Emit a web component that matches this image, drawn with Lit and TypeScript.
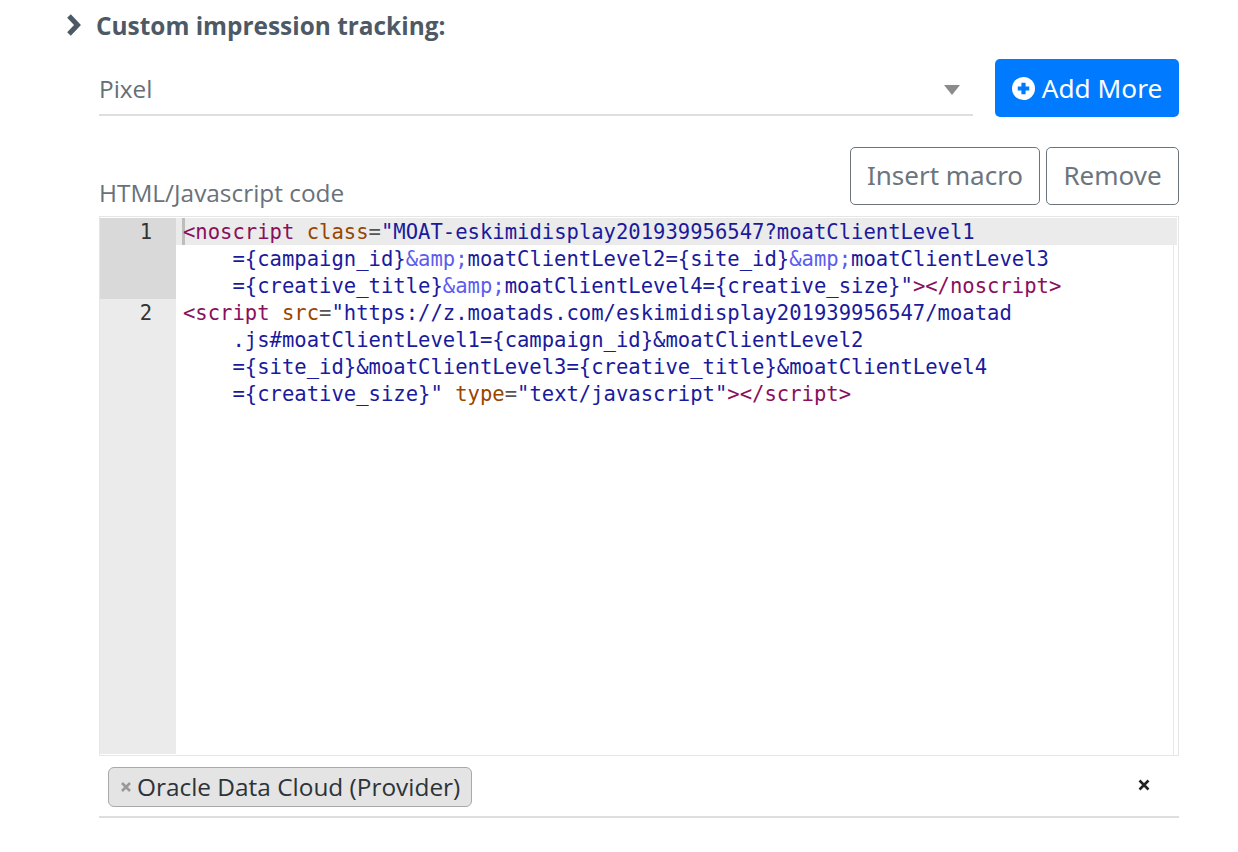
import { LitElement, html, css } from "lit";
import { customElement } from "lit/decorators.js";

const T = (s: string) => html`<span class="t">${s}</span>`;
const A = (s: string) => html`<span class="a">${s}</span>`;
const S = (s: string) => html`<span class="s">${s}</span>`;
const E = (s: string) => html`<span class="e">${s}</span>`;
const N = (s: string) => html`<span class="n">${s}</span>`;

@customElement("app-root")
export class AppRoot extends LitElement {
  static styles = css`
    :host {
      display: block;
      width: 1238px;
      height: 852px;
      box-sizing: border-box;
      padding: 10px 59px 0 65px;
      background: #fff;
      overflow: hidden;
      font-family: "Open Sans", "Noto Sans", sans-serif;
      color: #5f6a72;
    }
    .head {
      display: flex;
      align-items: center;
      gap: 15px;
      height: 30px;
      color: #4d5964;
      font-size: 24.4px;
      font-weight: 700;
    }
    .head svg { display: block; }
    .body {
      display: flex;
      flex-direction: column;
      margin: 19px 0 0 34px;
    }
    .row { display: flex; gap: 22px; }
    .select {
      flex: 1;
      height: 57px;
      align-self: flex-start;
      box-sizing: border-box;
      border-bottom: 2px solid #dedede;
      display: flex;
      align-items: center;
      justify-content: space-between;
      padding: 3px 13px 0 0;
      font-size: 24.4px;
      color: #666f76;
    }
    .caret {
      width: 0;
      height: 0;
      border-left: 8px solid transparent;
      border-right: 8px solid transparent;
      border-top: 10px solid #8b8b8b;
      margin-top: 3px;
    }
    .btn {
      box-sizing: border-box;
      height: 58px;
      display: flex;
      align-items: center;
      justify-content: center;
      border-radius: 5px;
      font-family: "Noto Sans", "Open Sans", sans-serif;
      font-size: 26px;
    }
    .add {
      width: 184px;
      background: #007bff;
      color: #fff;
      gap: 7px;
      font-size: 26.2px;
    }
    .outline {
      border: 1.5px solid #6c757d;
      color: #6c757d;
      background: #fff;
      padding-bottom: 2px;
    }
    .macro { width: 190px; }
    .remove { width: 133px; }
    .tools {
      display: flex;
      align-items: flex-end;
      gap: 6px;
      margin-top: 30px;
    }
    .label {
      flex: 1;
      font-size: 24.4px;
      color: #68727a;
      line-height: 30px;
      margin-bottom: -3px;
    }
    .editor {
      box-sizing: border-box;
      margin-top: 11px;
      height: 540px;
      border: 1px solid #e6e6e6;
      display: flex;
      font-family: "DejaVu Sans Mono", monospace;
      font-size: 20.55px;
      line-height: 29px;
      color: #1a1a8c;
    }
    .gutter {
      width: 76px;
      flex: none;
      background: #ebebeb;
      color: #333;
      text-align: right;
      margin-top: 1px;
      margin-bottom: 1px;
    }
    .gl { padding-right: 24px; box-sizing: border-box; height: 27px; }
    .gl.active { height: 81px; background: #d9d9d9; }
    .code {
      flex: 1;
      margin-top: 1px;
      margin-right: 4px;
      border-right: 1px solid #e9e9e9;
      min-width: 0;
    }
    .line {
      height: 27px;
      padding-left: 7px;
      box-sizing: border-box;
      white-space: pre;
    }
    .line.cur {
      position: relative;
      background: #ebebeb;
      margin-right: -4px;
    }
    .line.cur::before {
      content: "";
      position: absolute;
      left: 6px;
      top: 0;
      width: 3px;
      height: 27px;
      background: #bdbdbd;
    }
    .t { position: relative; color: #8a0f5c; }
    .a { color: #994500; }
    .s { color: #1a1a9c; }
    .e { color: #5c5cf0; }
    .n { color: #555; }
    .tags {
      display: flex;
      align-items: center;
      justify-content: space-between;
      height: 62px;
      border-bottom: 2px solid #dedede;
      padding: 1px 29px 0 9px;
      box-sizing: border-box;
    }
    .tag {
      box-sizing: border-box;
      height: 40px;
      width: 364px;
      border: 1px solid #a9a9a9;
      border-radius: 6px;
      background: #e4e4e4;
      display: flex;
      align-items: center;
      gap: 5px;
      padding-left: 11px;
      font-size: 24.4px;
      color: #2d3338;
      white-space: nowrap;
    }
    .tag svg, .tags > svg { flex: none; display: block; }
    .tags > svg { margin-bottom: 3px; }
  `;

  render() {
    return html`
      <div class="head">
        <svg width="16" height="24" viewBox="0 0 16 24">
          <path d="M4 3 L12.5 12 L4 21" fill="none" stroke="#4d5964" stroke-width="5" />
        </svg>
        <span>Custom impression tracking:</span>
      </div>
      <div class="body">
        <div class="row">
          <div class="select"><span>Pixel</span><span class="caret"></span></div>
          <div class="btn add">
            <svg width="23" height="23" viewBox="0 0 22 22">
              <circle cx="11" cy="11" r="11" fill="#fff" />
              <path d="M11 5.5V16.5M5.5 11H16.5" stroke="#007bff" stroke-width="4" />
            </svg>
            <span>Add More</span>
          </div>
        </div>
        <div class="tools">
          <div class="label">HTML/Javascript code</div>
          <div class="btn outline macro">Insert macro</div>
          <div class="btn outline remove">Remove</div>
        </div>
        <div class="editor">
          <div class="gutter">
            <div class="gl active">1</div>
            <div class="gl">2</div>
          </div>
          <div class="code">
            <div class="line cur">${T("<noscript")} ${A("class")}${N("=")}${S('"MOAT-eskimidisplay201939956547?moatClientLevel1')}</div>
            <div class="line">    ${S("={campaign_id}")}${E("&amp;")}${S("moatClientLevel2={site_id}")}${E("&amp;")}${S("moatClientLevel3")}</div>
            <div class="line">    ${S("={creative_title}")}${E("&amp;")}${S('moatClientLevel4={creative_size}"')}${T("></noscript>")}</div>
            <div class="line">${T("<script")} ${A("src")}${N("=")}${S('"https://z.moatads.com/eskimidisplay201939956547/moatad')}</div>
            <div class="line">    ${S(".js#moatClientLevel1={campaign_id}&moatClientLevel2")}</div>
            <div class="line">    ${S("={site_id}&moatClientLevel3={creative_title}&moatClientLevel4")}</div>
            <div class="line">    ${S('={creative_size}"')} ${A("type")}${N("=")}${S('"text/javascript"')}${T("></script>")}</div>
          </div>
        </div>
        <div class="tags">
          <div class="tag">
            <svg width="12" height="12" viewBox="0 0 12 12">
              <path d="M2 2L10 10M10 2L2 10" stroke="#999" stroke-width="2.6" />
            </svg>
            <span>Oracle Data Cloud (Provider)</span>
          </div>
          <svg width="12" height="12" viewBox="0 0 12 12">
            <path d="M1.5 1.5L10.5 10.5M10.5 1.5L1.5 10.5" stroke="#222" stroke-width="2.6" />
          </svg>
        </div>
      </div>
    `;
  }
}
